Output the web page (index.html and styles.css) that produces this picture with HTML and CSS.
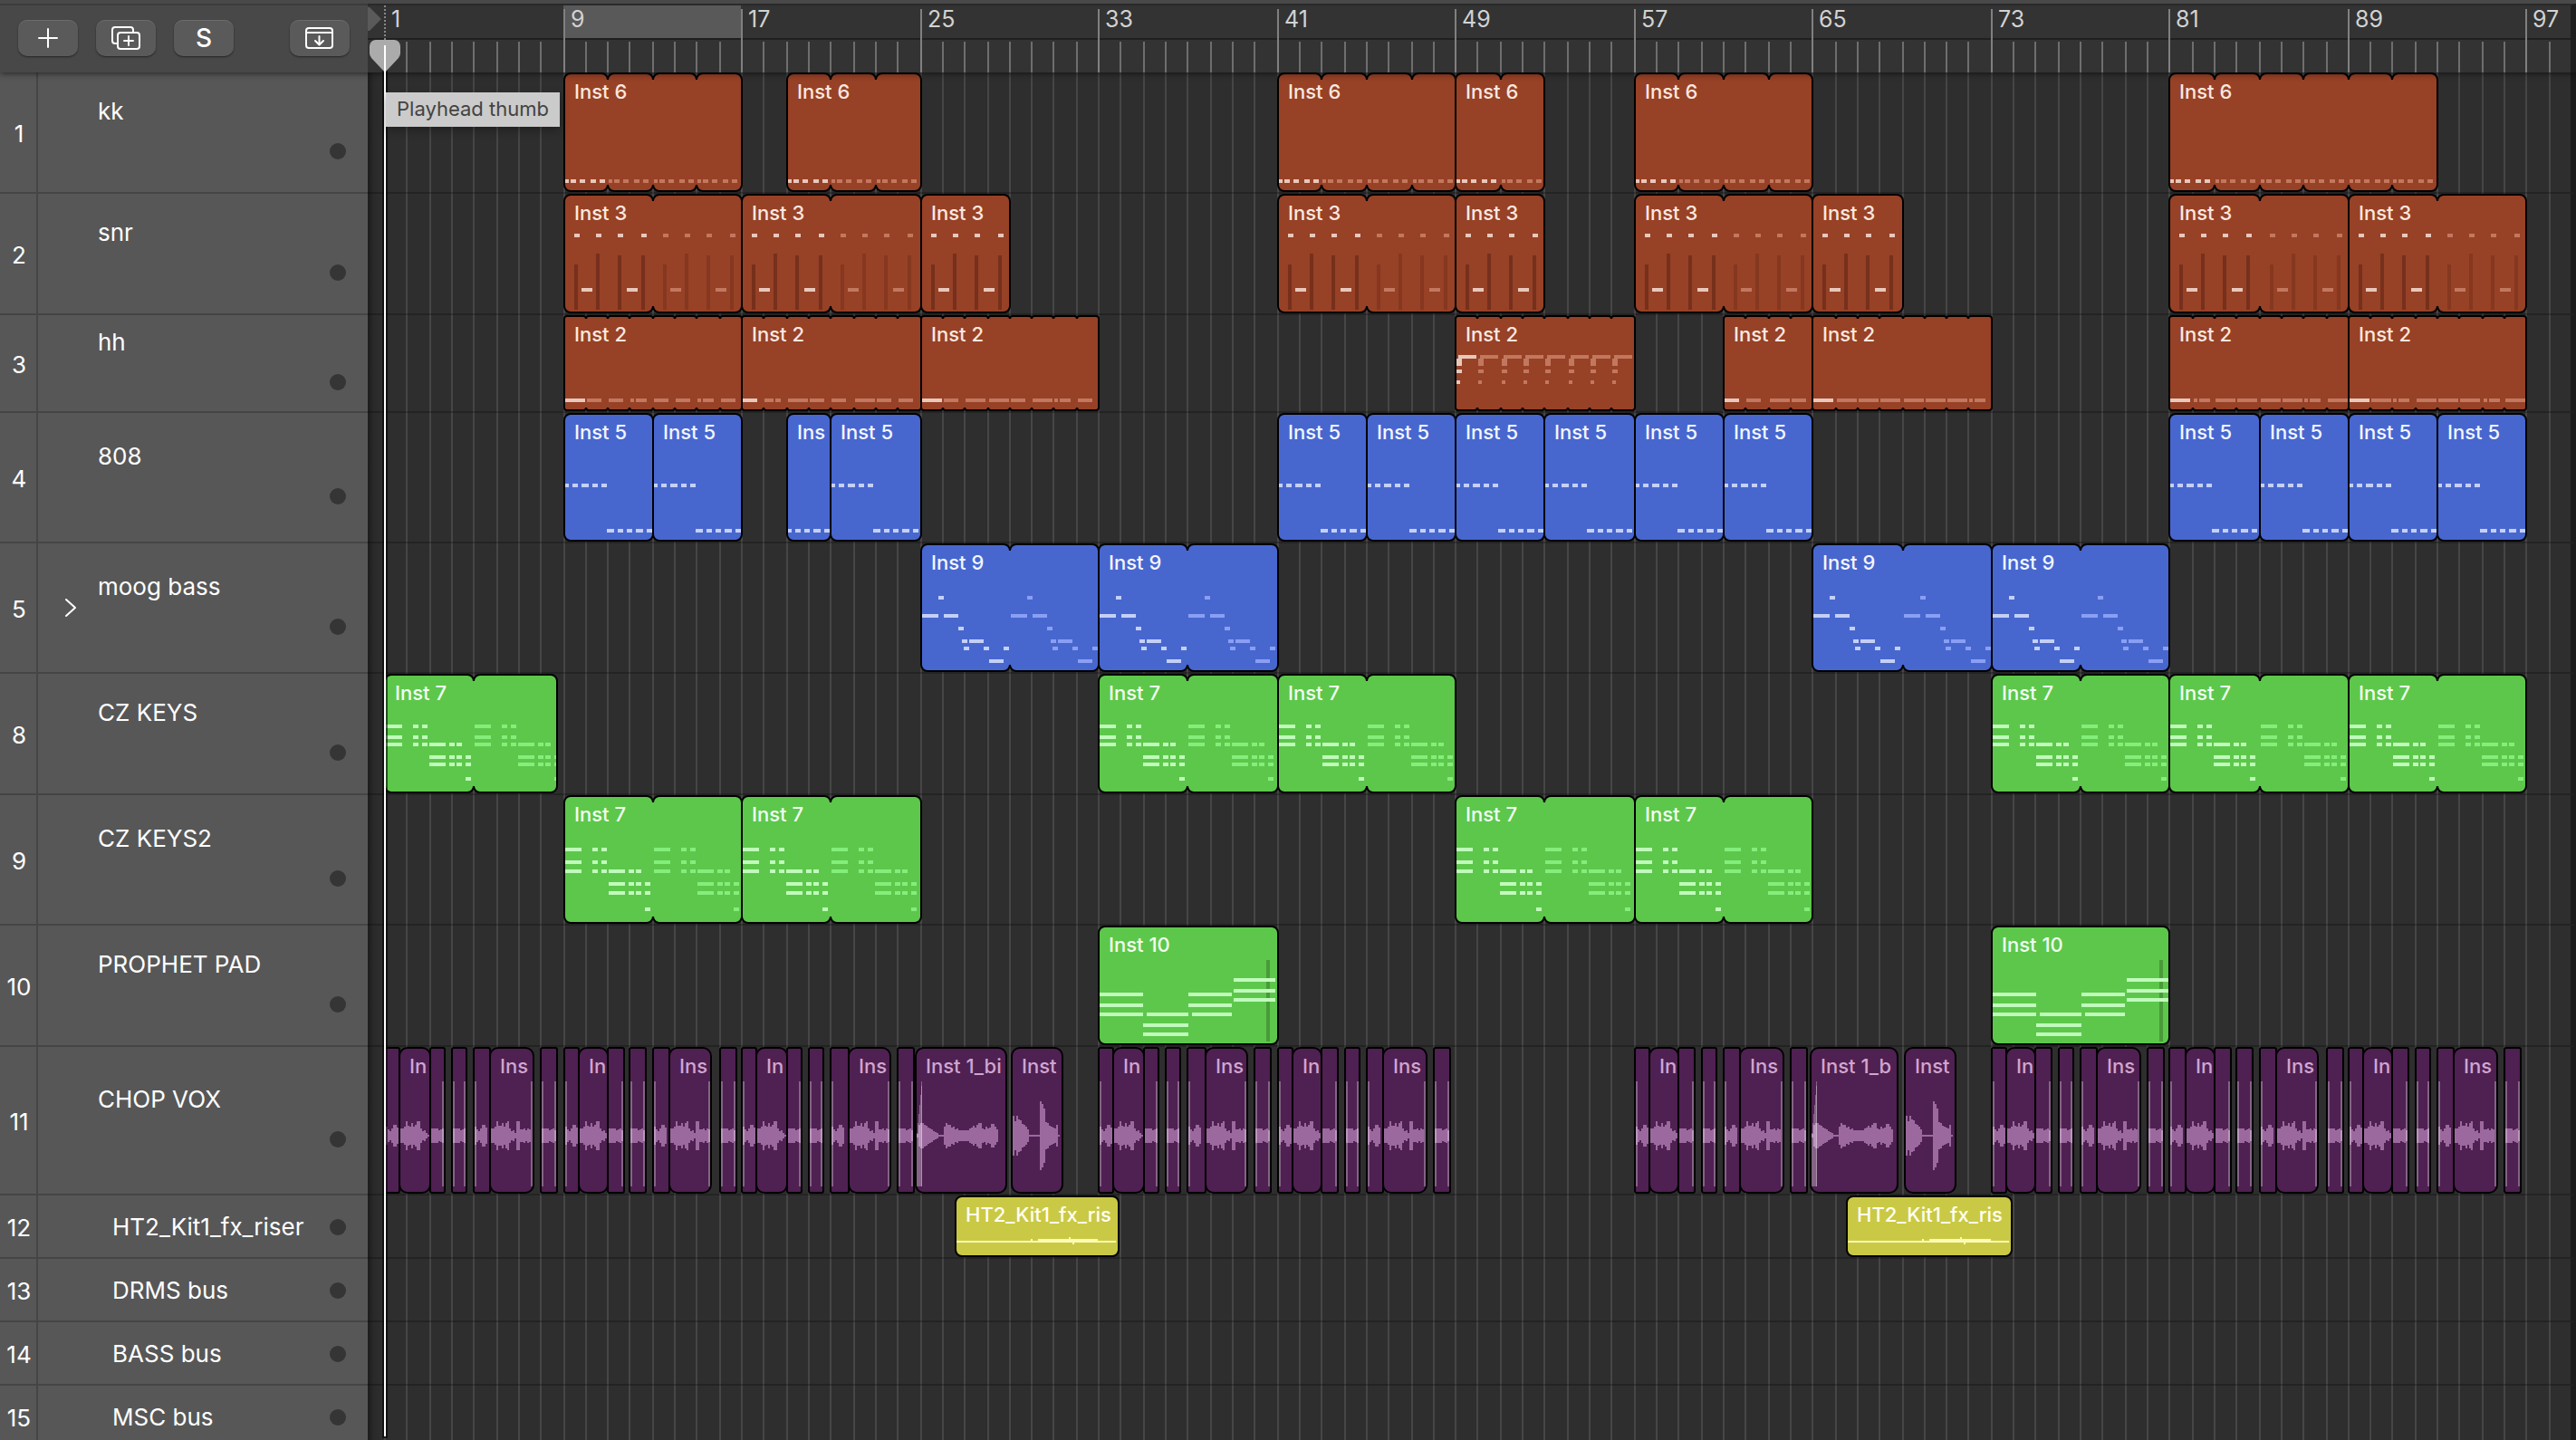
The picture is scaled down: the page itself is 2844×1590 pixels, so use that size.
FILE: index.html
```html
<!DOCTYPE html>
<html lang="en">
<head>
    <meta charset="UTF-8">
    <meta name="viewport" content="width=device-width, initial-scale=1.0">
    <title>Tracks</title>
    <link rel="stylesheet" href="styles.css">
</head>
<body>

    <div class="window">
        <header class="top">
            <div class="toolbar">
                <button class="tool" aria-label="Add track">
                    <svg width="22" height="22" viewBox="0 0 22 22"><path d="M11 1v20M1 11h20"/></svg>
                </button>
                <button class="tool" aria-label="Duplicate track">
                    <svg width="34" height="28" viewBox="0 0 34 28"><path d="M7 20H5a3 3 0 0 1-3-3V5a3 3 0 0 1 3-3h17a3 3 0 0 1 3 3v2"/><rect x="8" y="8" width="24" height="18" rx="3"/><path d="M20 12v10M15 17h10"/></svg>
                </button>
                <button class="tool tool-text" aria-label="Solo">S</button>
                <button class="tool tool-last" aria-label="Hide tracks">
                    <svg width="32" height="26" viewBox="0 0 32 26"><rect x="1" y="2" width="29" height="22" rx="3"/><path d="M1 7h29M15.5 11v9M11 16l4.500 4.500L20 16"/></svg>
                </button>
            </div>
            <div class="ruler" id="ruler"></div>
        </header>

        <main class="tracks" id="tracks">
            <svg class="grid-lines" id="gridLines"></svg>

            <section class="track">
                <div class="track-number">1</div>
                <div class="track-head"><span class="track-name">kk</span><span class="track-dot"></span></div>
                <div class="lane" data-lane="kk"></div>
            </section>
            <section class="track">
                <div class="track-number">2</div>
                <div class="track-head"><span class="track-name">snr</span><span class="track-dot"></span></div>
                <div class="lane" data-lane="snr"></div>
            </section>
            <section class="track track-low">
                <div class="track-number">3</div>
                <div class="track-head"><span class="track-name">hh</span><span class="track-dot"></span></div>
                <div class="lane" data-lane="hh"></div>
            </section>
            <section class="track track-tall">
                <div class="track-number">4</div>
                <div class="track-head"><span class="track-name">808</span><span class="track-dot"></span></div>
                <div class="lane" data-lane="bass808"></div>
            </section>
            <section class="track track-tall">
                <div class="track-number">5</div>
                <div class="track-head">
                    <button class="disclosure" aria-label="Show subtracks">
                        <svg width="14" height="22" viewBox="0 0 14 22"><path d="M2 2l10 9-10 9"/></svg>
                    </button>
                    <span class="track-name">moog bass</span><span class="track-dot"></span>
                </div>
                <div class="lane" data-lane="moog"></div>
            </section>
            <section class="track">
                <div class="track-number">8</div>
                <div class="track-head"><span class="track-name">CZ KEYS</span><span class="track-dot"></span></div>
                <div class="lane" data-lane="keys"></div>
            </section>
            <section class="track track-tall">
                <div class="track-number">9</div>
                <div class="track-head"><span class="track-name">CZ KEYS2</span><span class="track-dot"></span></div>
                <div class="lane" data-lane="keys2"></div>
            </section>
            <section class="track">
                <div class="track-number">10</div>
                <div class="track-head"><span class="track-name">PROPHET PAD</span><span class="track-dot"></span></div>
                <div class="lane" data-lane="pad"></div>
            </section>
            <section class="track track-vox">
                <div class="track-number">11</div>
                <div class="track-head"><span class="track-name">CHOP VOX</span><span class="track-dot"></span></div>
                <div class="lane" data-lane="vox"></div>
            </section>
            <section class="track track-bus">
                <div class="track-number">12</div>
                <div class="track-head"><span class="track-name">HT2_Kit1_fx_riser</span><span class="track-dot"></span></div>
                <div class="lane" data-lane="riser"></div>
            </section>
            <section class="track track-bus">
                <div class="track-number">13</div>
                <div class="track-head"><span class="track-name">DRMS bus</span><span class="track-dot"></span></div>
                <div class="lane"></div>
            </section>
            <section class="track track-bus">
                <div class="track-number">14</div>
                <div class="track-head"><span class="track-name">BASS bus</span><span class="track-dot"></span></div>
                <div class="lane"></div>
            </section>
            <section class="track track-bus">
                <div class="track-number">15</div>
                <div class="track-head"><span class="track-name">MSC bus</span><span class="track-dot"></span></div>
                <div class="lane"></div>
            </section>
        </main>

        <div class="playhead"></div>
        <svg class="playhead-thumb" width="34" height="36" viewBox="0 0 34 36"><path d="M7 0h20a7 7 0 0 1 7 7v8q0 2-2 5L17 36 2 20q-2-3-2-5V7a7 7 0 0 1 7-7z"/><rect x="16" y="6" width="2" height="30"/></svg>
        <div class="tooltip" role="tooltip">Playhead thumb</div>
    </div>

    <script src="script.js"></script>
</body>
</html>
```
FILE: styles.css
```css
* {
    box-sizing: border-box;
}

body {
    margin: 0;
    background-color: #2e2e2e;
    color: #fff;
    font-family: Inter, "Liberation Sans", sans-serif;
    font-size: 26px;
    overflow: hidden;
}

button {
    font-family: inherit;
    color: inherit;
    border: none;
    padding: 0;
}

.window {
    position: relative;
    height: 100vh;
    overflow: hidden;
}

/* Toolbar and ruler */
.top {
    position: relative;
    z-index: 3;
    display: flex;
    height: 80px;
    border-top: 4px solid #494949;
    background-color: #484848;
    box-shadow: 0 1px 7px rgba(0, 0, 0, 0.6);
}

.toolbar {
    display: flex;
    align-items: center;
    gap: 20px;
    flex: 0 0 406px;
    padding: 0 20px 2px;
    border-top: 2px solid #3c3c3c;
}

.tool {
    display: flex;
    align-items: center;
    justify-content: center;
    width: 66px;
    height: 40px;
    border-radius: 10px;
    background-color: #5a5a5a;
    box-shadow: 0 1px 2px rgba(0, 0, 0, 0.5), inset 0 1px 0 #6c6c6c;
}

.tool svg,
.disclosure svg {
    display: block;
    fill: none;
    stroke: #fff;
    stroke-width: 2;
    stroke-linecap: round;
    stroke-linejoin: round;
}

.tool-text {
    font-size: 28px;
    font-weight: 500;
}

.tool-last {
    margin-left: auto;
}

.ruler {
    position: relative;
    flex: 1;
    background-color: #333;
    border-top: 2px solid #2a2a2a;
    border-right: 6px solid #1e1e1e;
    overflow: hidden;
}

.ruler svg {
    position: absolute;
    left: 0;
    top: 0;
}

.ruler-number {
    position: absolute;
    top: 0;
    font-size: 25px;
    line-height: 30px;
    color: #d2d2d2;
}

/* Track rows */
.tracks {
    position: relative;
}

.grid-lines {
    position: absolute;
    left: 406px;
    top: 0;
    width: calc(100% - 406px);
    height: 100%;
}

.track {
    position: relative;
    display: flex;
    height: 134px;
}

.track-low {
    height: 108px;
}

.track-tall {
    height: 144px;
}

.track-vox {
    height: 164px;
}

.track-bus {
    height: 70px;
}

.track-number {
    display: flex;
    align-items: center;
    justify-content: center;
    flex: 0 0 42px;
    padding: 2px 0 0 2px;
    border-right: 2px solid #454545;
    border-bottom: 2px solid #454545;
    background-color: #575757;
}

.track-head {
    position: relative;
    display: flex;
    flex-direction: column;
    justify-content: center;
    gap: 20px;
    flex: 0 0 364px;
    padding: 0 24px 8px 66px;
    border-bottom: 2px solid #454545;
    background-color: #575757;
}

.track-name {
    line-height: 30px;
    white-space: nowrap;
}

.track-dot {
    width: 18px;
    height: 18px;
    border-radius: 50%;
    background-color: #353535;
    align-self: flex-end;
}

.track-bus .track-head {
    flex-direction: row;
    align-items: center;
    justify-content: space-between;
    padding: 2px 24px 0 82px;
}

.track-bus .track-dot {
    align-self: center;
}

.disclosure {
    position: absolute;
    left: 29px;
    top: 60px;
    background: none;
}

.lane {
    position: relative;
    flex: 1;
    border-bottom: 2px solid rgba(0, 0, 0, 0.24);
    border-right: 6px solid #1c1c1c;
}

/* Shade cast by the header column */
.lane::before {
    content: "";
    position: absolute;
    left: 0;
    top: 0;
    bottom: -2px;
    width: 16px;
    background: linear-gradient(to right, rgba(0, 0, 0, 0.4), rgba(0, 0, 0, 0.1) 40%, transparent);
}

/* Regions */
.region {
    position: absolute;
    top: 0;
    bottom: 0;
    overflow: hidden;
    padding: 7px 0 0 12px;
    font-size: 22px;
    font-weight: 500;
    line-height: 28px;
    white-space: nowrap;
}

.region svg {
    position: absolute;
    left: 0;
    top: 0;
}

.region span {
    position: relative;
}

.orange { color: #fbe7df; --fill: #974126; --note: #e9c8bc; --dim: #c2785e; --vel: #76301c; --vel-dim: #86371f; }
.blue { color: #f2f5ff; --fill: #4767cf; --note: #c5d0f6; --dim: #8a9ff4; }
.green { color: #f0fff0; --fill: #5dc74b; --note: #c0fbbb; --dim: #84ee7b; --vel: #499b3a; }
.purple { color: #d0a5cf; --fill: #4f2052; --note: #9c699f; }
.yellow { color: #fffff0; --fill: #cac945; --note: #fcfbb4; }

.body { fill: var(--fill); stroke: #000; stroke-width: 2; }
.note { fill: var(--note); }
.note-dim { fill: var(--dim); }
.vel { fill: var(--vel); }
.vel-dim { fill: var(--vel-dim); }
.fade { fill: rgba(255, 255, 255, 0.3); }

/* Playhead */
.playhead {
    position: absolute;
    z-index: 4;
    left: 424px;
    top: 76px;
    bottom: 4px;
    width: 2px;
    background-color: #fff;
    box-shadow: 0 0 0 2px rgba(0, 0, 0, 0.6);
}

.playhead-thumb {
    position: absolute;
    z-index: 5;
    left: 408px;
    top: 44px;
    fill: #ababab;
}

.playhead-thumb rect {
    fill: #fff;
}

.tooltip {
    position: absolute;
    z-index: 5;
    left: 426px;
    top: 102px;
    height: 38px;
    padding: 0 12px;
    background-color: #cbcbcb;
    color: #434343;
    font-size: 22px;
    line-height: 37px;
    box-shadow: 0 4px 10px rgba(0, 0, 0, 0.3);
}
```
FILE: script.js
```js
const BARS = 98;
const LANE_START = 18;

let unit = 24;

// Left edge of a bar, kept on even pixels so that the 2px lines stay crisp
function barX(bar) {
    return LANE_START + Math.floor(((bar - 1) * unit + 0.98) / 2) * 2;
}

function rect(x, y, w, h, cls) {
    return `<rect class="${cls}" x="${x}" y="${y}" width="${w}" height="${h}"/>`;
}

// Note patterns: [x, y, width, height] in pixels from the start of one loop
const row = (y, list) => list.map(([x, w]) => [x, y, w, 4]);

const kkNotes = row(118, [[2, 4], [8, 6], [18, 6], [30, 6], [40, 6]]);

const snrNotes = [
    ...row(44, [[12, 6], [36, 6], [60, 6], [86, 6]]),
    ...row(104, [[20, 12], [70, 12]])
];
const snrVel = [[12, 78, 4, 50], [36, 66, 4, 62], [60, 68, 4, 60], [86, 68, 4, 60]];

const hatSteps = {
    f: [[2, 22]],
    s: [[2, 16]],
    e: [[2, 10], [14, 6]],
    d: [[2, 4], [8, 12]]
};

const hatFill = [[4, 44, 20, 4], [2, 48, 6, 8], [2, 60, 6, 4], [2, 72, 4, 4]];

const bassHigh = row(78, [[2, 4], [10, 6], [20, 8], [32, 6], [42, 6]]);
const bassLow = row(128, [[48, 8], [60, 6], [70, 6], [80, 8], [92, 6]]);

const moogNotes = [
    ...row(58, [[20, 6]]),
    ...row(78, [[2, 18], [26, 16]]),
    ...row(92, [[42, 6]]),
    ...row(106, [[46, 6], [54, 16]]),
    ...row(114, [[48, 6], [70, 6], [92, 6]]),
    ...row(128, [[76, 16]])
];

function keysNotes(ys) {
    const a = [[2, 18], [32, 6], [42, 6]];
    const b = [[50, 18], [72, 6], [80, 6]];
    return [
        ...row(ys[0], a),
        ...row(ys[1], a),
        ...row(ys[2], [...a, ...b]),
        ...row(ys[3], [...b, [90, 6]]),
        ...row(ys[4], [...b, [90, 6]]),
        ...row(ys[5], [[90, 6]])
    ];
}
const keysLow = keysNotes([56, 68, 76, 90, 98, 114]);
const keysTall = keysNotes([58, 72, 82, 96, 106, 124]);

const padNotes = [
    ...row(58, [[150, 46]]),
    ...row(70, [[150, 46]]),
    ...row(74, [[2, 48], [100, 48]]),
    ...row(80, [[150, 46]]),
    ...row(86, [[2, 48], [100, 48]]),
    ...row(96, [[2, 48], [54, 46], [104, 44]]),
    ...row(108, [[50, 50]]),
    ...row(118, [[50, 50]])
];

// Waveforms: half height of each 2px column
const waves = {
    a: [10, 7, 5, 8, 12, 12, 9],
    b: [8, 8, 8, 8, 6, 7, 8, 6],
    short: [8, 8, 10, 16, 11, 10, 14, 10, 12, 16, 16, 8, 5, 6, 3, 1],
    long: [8, 8, 10, 16, 11, 11, 14, 10, 14, 16, 8, 5, 6, 3, 16, 16, 7, 7, 8, 6, 8, 7],
    big: [2, 12, 14, 14, 12, 11, 9, 8, 7, 5, 4, 3, 1, 1, 1, 10, 14, 12, 12, 9, 10, 7, 8, 6, 6, 6, 6, 6, 6, 8, 9, 11, 9, 12, 14, 14, 8, 7, 10, 8, 9, 13, 13, 10, 7],
    hit: [22, 16, 22, 18, 17, 13, 12, 10, 7, 1, 1, 1, 1, 1, 1, 38, 35, 30, 15, 14, 11, 10, 9, 8, 12, 1]
};

const lanes = {
    kk: {
        color: 'orange', label: 'Inst 6', loop: 2, notes: kkNotes,
        regions: [[9, 17], [19, 25], [41, 49], [49, 53], [57, 65], [81, 93]]
    },
    snr: {
        color: 'orange', label: 'Inst 3', loop: 4, notes: snrNotes, vel: snrVel,
        regions: [[9, 17], [17, 25], [25, 29], [41, 49], [49, 53], [57, 65], [65, 69], [81, 89], [89, 97]]
    },
    hh: {
        color: 'orange', label: 'Inst 2', loop: 1, radius: 3,
        regions: [
            [9, 17, 'fssdssds'], [17, 25, 'sefssfss'], [25, 33, 'fsffsfds'],
            [49, 57, 'fill'], [61, 65, 'ssfs'], [65, 73, 'fffffffd'],
            [81, 89, 'fdffffdf'], [89, 97, 'ffdfffdf']
        ]
    },
    bass808: {
        color: 'blue', label: 'Inst 5', loop: 4, notes: [...bassHigh, ...bassLow],
        regions: [[9, 13], [13, 17], [19, 21, 'half'], [21, 25], [41, 45], [45, 49], [49, 53], [53, 57], [57, 61], [61, 65], [81, 85], [85, 89], [89, 93], [93, 97]]
    },
    moog: {
        color: 'blue', label: 'Inst 9', loop: 4, notes: moogNotes,
        regions: [[25, 33], [33, 41], [65, 73], [73, 81]]
    },
    keys: {
        color: 'green', label: 'Inst 7', loop: 4, notes: keysLow,
        regions: [[1, 8.7], [33, 41], [41, 49], [73, 81], [81, 89], [89, 97]]
    },
    keys2: {
        color: 'green', label: 'Inst 7', loop: 4, notes: keysTall,
        regions: [[9, 17], [17, 25], [49, 57], [57, 65]]
    },
    pad: {
        color: 'green', label: 'Inst 10', loop: 8, notes: padNotes, vel: [[186, 38, 4, 90]],
        regions: [[33, 41], [73, 81]]
    }
};

// One phrase of vocal chops: [start, end, wave, label, fades]
const phrase = [
    [0, 0.68, 'a', '', 'l'],
    [0.68, 2, 'short', 'In', ''],
    [2, 2.7, 'b', '', 'r'],
    [3, 3.68, 'b', '', 'lr'],
    [4, 4.75, 'a', '', 'l'],
    [4.75, 6.65, 'long', 'Ins', 'r'],
    [7, 7.73, 'b', '', 'lr']
];

const voxRegions = [];
[1, 9, 17, 33, 41, 57, 73, 81, 89].forEach(start => {
    phrase.forEach(([a, b, wave, label, fades]) => {
        voxRegions.push([start + a, start + b, wave, label, fades]);
    });
});
voxRegions.push(
    [24.78, 28.86, 'big', 'Inst 1_bi', 'L'],
    [29.08, 31.36, 'hit', 'Inst', ''],
    [64.86, 68.8, 'big', 'Inst 1_b', 'L'],
    [69.12, 71.38, 'hit', 'Inst', '']
);

const riserRegions = [[26.6, 33.9], [66.54, 73.94]];

// Rounded body with a notch at every loop point
function bodyPath(w, h, r, cuts) {
    let d = `M1 ${1 + r}A${r} ${r} 0 0 1 ${1 + r} 1`;
    cuts.forEach(x => {
        d += `H${x - r}A${r} ${r} 0 0 1 ${x} ${1 + r}A${r} ${r} 0 0 1 ${x + r} 1`;
    });
    d += `H${w - 1 - r}A${r} ${r} 0 0 1 ${w - 1} ${1 + r}V${h - 1 - r}A${r} ${r} 0 0 1 ${w - 1 - r} ${h - 1}`;
    cuts.slice().reverse().forEach(x => {
        d += `H${x + r}A${r} ${r} 0 0 1 ${x} ${h - 1 - r}A${r} ${r} 0 0 1 ${x - r} ${h - 1}`;
    });
    d += `H${1 + r}A${r} ${r} 0 0 1 1 ${h - 1 - r}Z`;
    return `<path class="body" d="${d}"/>`;
}

function addRegion(lane, color, start, end, label, radius, cuts, content) {
    const left = barX(start);
    const w = barX(end) - left + 2;
    const h = lane.clientHeight;
    const el = document.createElement('div');
    el.className = 'region ' + color;
    el.style.left = left + 'px';
    el.style.width = w + 'px';
    el.innerHTML = `<svg width="${w}" height="${h}">` +
        bodyPath(w, h, radius, cuts) +
        `<g shape-rendering="crispEdges">${content(w, h)}</g></svg>` +
        (label ? `<span>${label}</span>` : '');
    lane.appendChild(el);
}

function drawMidi(lane, track) {
    track.regions.forEach(([start, end, steps]) => {
        const left = barX(start);
        const cuts = [];
        for (let b = start + track.loop; b < end; b += track.loop) {
            cuts.push(barX(b) - left + 1);
        }
        let label = track.label;
        if (steps === 'half') {
            label = 'Ins';
        }
        addRegion(lane, track.color, start, end, label, track.radius || 7, cuts, w => {
            let out = '';
            let i = 0;
            for (let b = start; b < end; b += track.loop) {
                const from = steps === 'half' ? barX(start - 2) - left : barX(b) - left;
                const dim = b > start ? '-dim' : '';
                let notes = track.notes;
                if (steps === 'fill') {
                    notes = hatFill;
                } else if (!notes) {
                    notes = row(92, hatSteps[steps[i]]);
                }
                (track.vel || []).forEach(([x, y, nw, nh]) => {
                    out += rect(from + x, y, nw, nh, 'vel' + dim);
                });
                notes.forEach(([x, y, nw, nh]) => {
                    const x1 = Math.max(from + x, 2);
                    const x2 = Math.min(from + x + nw, w - 2);
                    if (x2 > x1) {
                        out += rect(x1, y, x2 - x1, nh, 'note' + dim);
                    }
                });
                i++;
            }
            return out;
        });
    });
}

function drawVox(lane) {
    voxRegions.forEach(([start, end, wave, label, fades]) => {
        addRegion(lane, 'purple', start, end, label, label ? 9 : 2, [], w => {
            let out = '';
            waves[wave].forEach((a, i) => {
                if (4 + i * 2 <= w - 2) {
                    out += rect(2 + i * 2, 98 - a, 2, a * 2, 'note');
                }
            });
            if (fades.includes('l') && start > 1) {
                out += rect(2, 38, 2, 116, 'fade');
            }
            if (fades.includes('r')) {
                out += rect(w - 4, 38, 2, 116, 'fade');
            }
            if (fades === 'L') {
                out += '<path class="fade" d="M8 38V154H2V100z"/>' + rect(7, 38, 1, 116, 'fade');
            }
            return out;
        });
    });
}

function drawRiser(lane) {
    riserRegions.forEach(([start, end]) => {
        addRegion(lane, 'yellow', start, end, 'HT2_Kit1_fx_ris', 7, [], w =>
            rect(2, 50, w - 6, 2, 'note') +
            rect(84, 48, 2, 2, 'note') +
            rect(92, 48, w - 116, 2, 'note') +
            rect(126, 46, 2, 2, 'note') +
            rect(130, 52, 2, 2, 'note'));
    });
}

function drawRuler() {
    const ruler = document.getElementById('ruler');
    const w = ruler.clientWidth;
    let out = `<svg width="${w}" height="74">`;
    out += `<rect x="${barX(9)}" y="0" width="${barX(17) - barX(9)}" height="36" fill="#595959"/>`;
    out += `<rect x="0" y="36" width="${w}" height="2" fill="#202020"/>`;
    out += '<path d="M0 2h2l13 13-13 13H0z" fill="#5a5a5a"/>';
    for (let b = 2; b <= BARS; b++) {
        const major = (b - 1) % 8 === 0;
        out += `<rect x="${barX(b)}" y="${major ? 4 : 40}" width="2" height="${major ? 70 : 34}" fill="${major ? '#808080' : '#6e6e6e'}"/>`;
    }
    out += `<path d="M${barX(1) + 1} 0V38" stroke="#888" stroke-width="2" stroke-dasharray="2 2"/></svg>`;
    for (let b = 1; b <= 97; b += 8) {
        out += `<span class="ruler-number" style="left: ${barX(b) + 8}px">${b}</span>`;
    }
    ruler.innerHTML = out;
}

function drawGridLines() {
    const h = document.getElementById('tracks').clientHeight;
    let out = '';
    for (let b = 1; b <= BARS; b++) {
        out += `<rect x="${barX(b)}" y="0" width="2" height="${h}" fill="#464646"/>`;
    }
    document.getElementById('gridLines').innerHTML = out;
}

function draw() {
    unit = (document.getElementById('ruler').clientWidth - LANE_START) / BARS;
    drawRuler();
    drawGridLines();
    document.querySelectorAll('[data-lane]').forEach(lane => {
        const name = lane.dataset.lane;
        lane.innerHTML = '';
        if (name === 'vox') {
            drawVox(lane);
        } else if (name === 'riser') {
            drawRiser(lane);
        } else {
            drawMidi(lane, lanes[name]);
        }
    });
}

draw();
window.addEventListener('resize', draw);
```
